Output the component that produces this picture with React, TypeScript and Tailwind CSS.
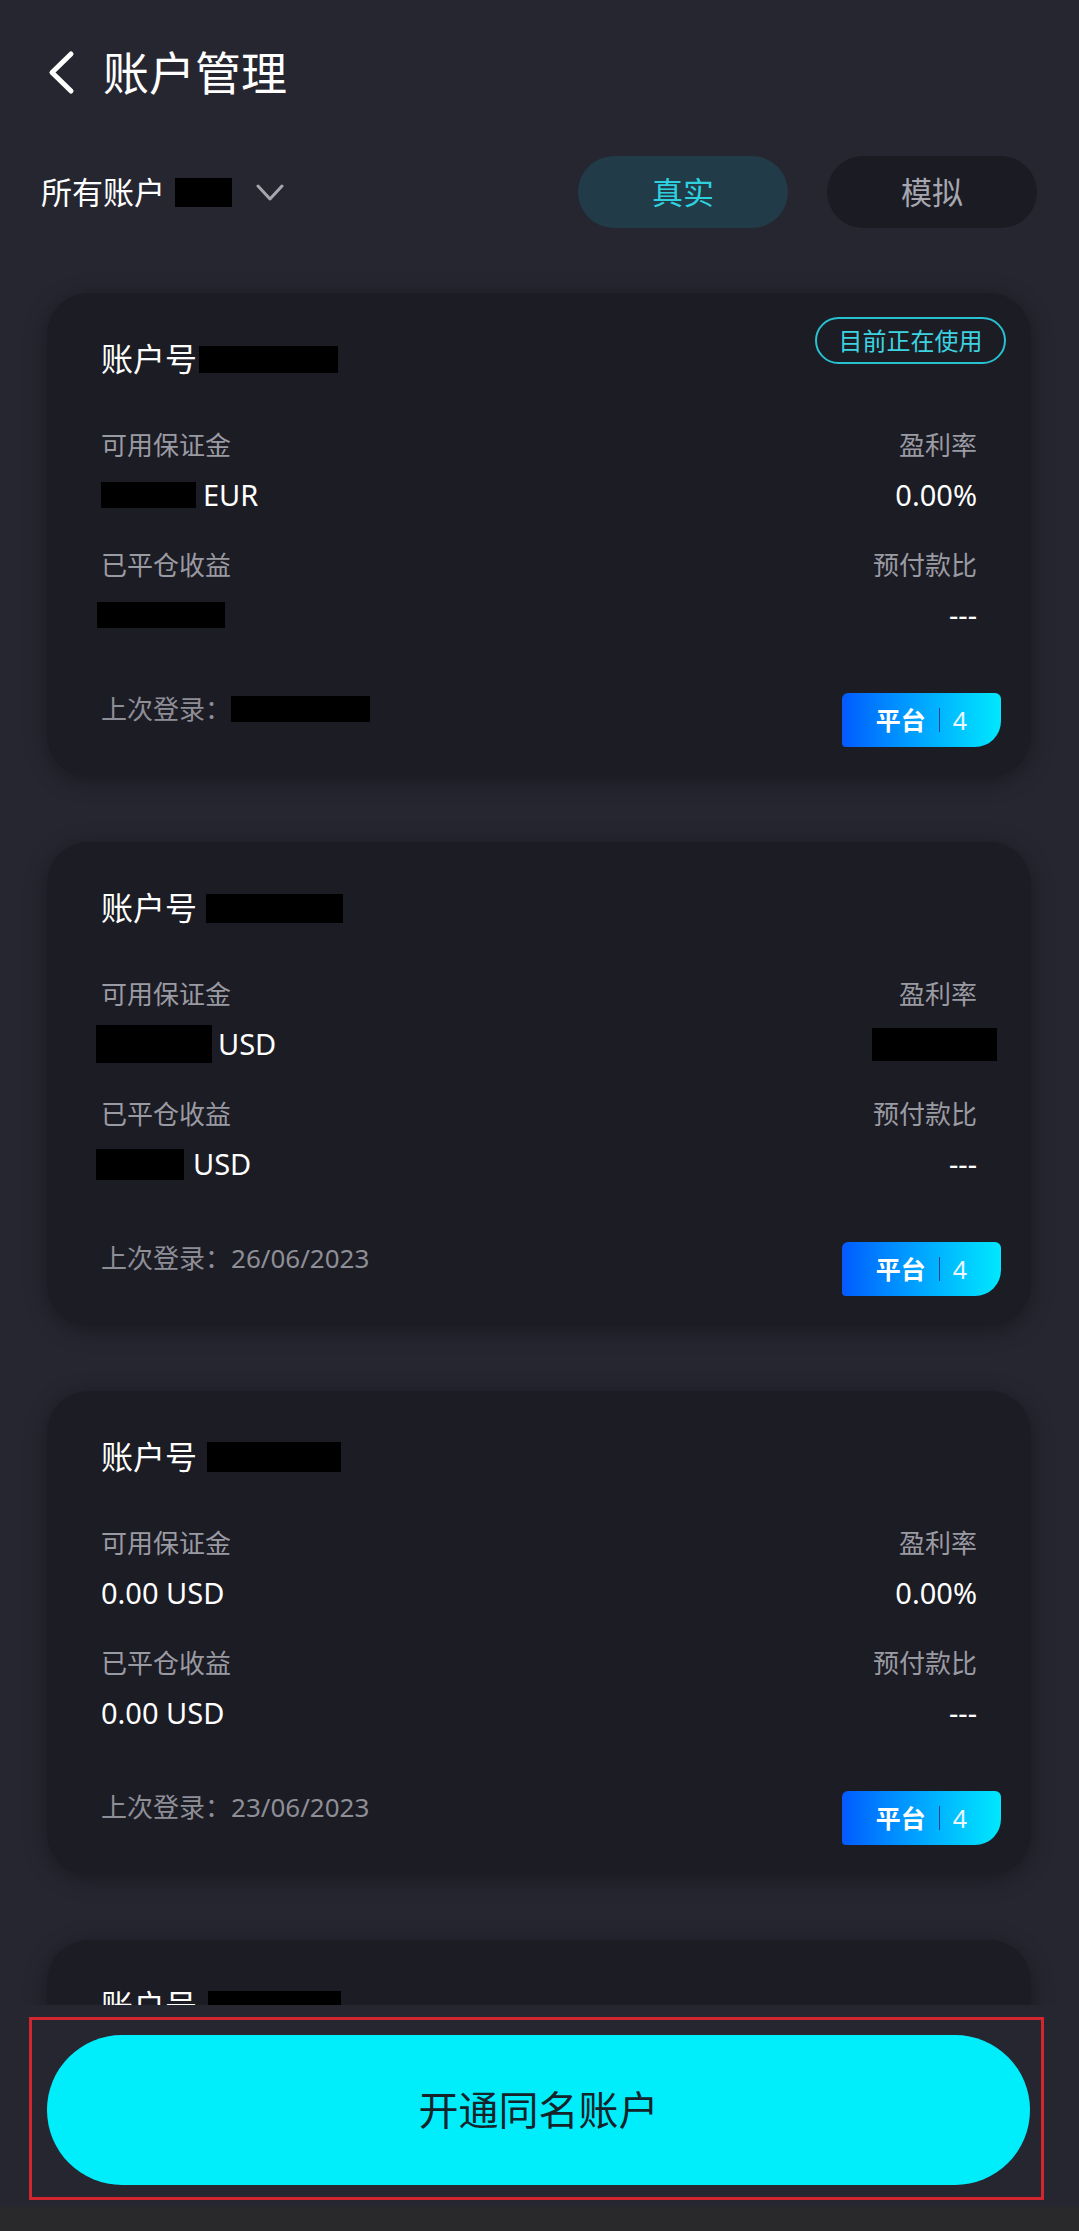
import type { ReactNode } from "react";

const FONT = { fontFamily: '"Noto Sans", "Noto Sans CJK SC", sans-serif' };

/** Black redaction block, sized by a full class string. */
function Mask({ className }: { className: string }) {
  return <span className={`inline-block bg-black ${className}`} aria-hidden />;
}

function BackIcon() {
  return (
    <svg viewBox="0 0 28 45" className="h-[45px] w-[28px]" fill="none" aria-hidden>
      <polyline
        points="24,4 5,22.5 24,41"
        stroke="#ffffff"
        strokeWidth="5"
        strokeLinecap="round"
        strokeLinejoin="round"
      />
    </svg>
  );
}

function ChevronDown() {
  return (
    <svg viewBox="0 0 28 17" className="h-[17px] w-[28px]" fill="none" aria-hidden>
      <polyline
        points="2,2 14,15 26,2"
        stroke="#a6a6ae"
        strokeWidth="3"
        strokeLinecap="round"
        strokeLinejoin="round"
      />
    </svg>
  );
}

type Account = {
  active?: boolean;
  id: ReactNode;
  avail: ReactNode;
  ratio: ReactNode;
  closed: ReactNode;
  prepay: string;
  login: ReactNode;
};

const ACCOUNTS: Account[] = [
  {
    active: true,
    id: <Mask className="ml-[2px] h-[27px] w-[139px]" />,
    avail: (
      <span className="flex items-center">
        <Mask className="h-[26px] w-[95px]" />
        <span className="ml-[7px]">EUR</span>
      </span>
    ),
    ratio: <span>0.00%</span>,
    closed: <Mask className="-ml-[4px] h-[26px] w-[128px]" />,
    prepay: "---",
    login: <Mask className="h-[26px] w-[139px]" />,
  },
  {
    id: <Mask className="ml-[9px] h-[29px] w-[137px]" />,
    avail: (
      <span className="flex items-center">
        <Mask className="-ml-[5px] h-[38px] w-[116px]" />
        <span className="ml-[6px]">USD</span>
      </span>
    ),
    ratio: <Mask className="-mr-[20px] h-[33px] w-[125px]" />,
    closed: (
      <span className="flex items-center">
        <Mask className="-ml-[5px] h-[31px] w-[88px]" />
        <span className="ml-[9px]">USD</span>
      </span>
    ),
    prepay: "---",
    login: "26/06/2023",
  },
  {
    id: <Mask className="ml-[10px] h-[30px] w-[134px]" />,
    avail: <span>0.00 USD</span>,
    ratio: <span>0.00%</span>,
    closed: <span>0.00 USD</span>,
    prepay: "---",
    login: "23/06/2023",
  },
  {
    id: <Mask className="ml-[11px] h-[30px] w-[133px]" />,
    avail: <span>0.00 USD</span>,
    ratio: <span>0.00%</span>,
    closed: <span>0.00 USD</span>,
    prepay: "---",
    login: "20/06/2023",
  },
];

function PlatformTag() {
  return (
    <span className="-mr-[24px] flex h-[54px] w-[159px] items-center justify-center rounded-tl-[6px] rounded-tr-[6px] rounded-br-[26px] rounded-bl-[4px] bg-gradient-to-r from-[#0759ff] to-[#00e8fd]">
      <span className="text-[25px] font-bold leading-none text-white">平台</span>
      <span className="mx-[13px] h-[24px] w-px bg-[#1b3f8c]" />
      <span className="text-[25px] leading-none text-[#eef7ff]">4</span>
    </span>
  );
}

function AccountCard({ a }: { a: Account }) {
  return (
    <div className="relative h-[484px] shrink-0 rounded-[42px] bg-[#1c1c24] px-[54px] pt-[46px] pb-[30px] shadow-[0_4px_22px_rgba(0,0,0,0.35)]">
      {a.active && (
        <span className="absolute right-[25px] top-[24px] flex h-[47px] w-[191px] items-center justify-center rounded-full border-2 border-[#27c1cf] text-[24px] text-[#3dd3e0]">
          目前正在使用
        </span>
      )}
      <div className="flex h-[40px] items-center text-[32px] leading-[40px] text-white">
        账户号
        {a.id}
      </div>

      <div className="mt-[50px] flex h-[32px] items-center justify-between text-[26px] leading-[32px] text-[#9a9aa3]">
        <span>可用保证金</span>
        <span>盈利率</span>
      </div>
      <div className="mt-[16px] flex h-[36px] items-center justify-between text-[29px] leading-[36px] text-white">
        {a.avail}
        {a.ratio}
      </div>

      <div className="mt-[36px] flex h-[32px] items-center justify-between text-[26px] leading-[32px] text-[#9a9aa3]">
        <span>已平仓收益</span>
        <span>预付款比</span>
      </div>
      <div className="mt-[16px] flex h-[36px] items-center justify-between text-[29px] leading-[36px] text-white">
        {a.closed}
        <span>{a.prepay}</span>
      </div>

      <div className="mt-[60px] flex items-start justify-between">
        <span className="flex h-[32px] items-center text-[26px] leading-[32px] text-[#8e8e97]">
          上次登录：{a.login}
        </span>
        <PlatformTag />
      </div>
    </div>
  );
}

export default function App() {
  return (
    <div className="flex h-[2231px] w-[1079px] flex-col overflow-hidden bg-[#262631]" style={FONT}>
      {/* scrolling part, cut off above the action bar */}
      <div className="h-[2005px] shrink-0 overflow-hidden">
        <div className="flex items-center pl-[47px] pt-[46px]">
          <BackIcon />
          <h1 className="ml-[28px] text-[46px] font-normal leading-[52px] text-white">账户管理</h1>
        </div>

        <div className="mt-[58px] flex h-[72px] items-center justify-between pl-[41px] pr-[42px]">
          <div className="flex items-center">
            <span className="text-[31px] leading-[40px] text-white">所有账户</span>
            <Mask className="ml-[10px] h-[29px] w-[57px]" />
            <span className="ml-[24px] flex items-center">
              <ChevronDown />
            </span>
          </div>
          <div className="flex items-center gap-[39px]">
            <button className="flex h-[72px] w-[210px] items-center justify-center rounded-full bg-[#213b48] text-[31px] text-[#2fd0de]">
              真实
            </button>
            <button className="flex h-[72px] w-[210px] items-center justify-center rounded-full bg-[#1b1b23] text-[31px] text-[#a6a6ae]">
              模拟
            </button>
          </div>
        </div>

        <div className="mt-[65px] flex flex-col gap-[65px] pl-[47px] pr-[48px]">
          {ACCOUNTS.map((a, i) => (
            <AccountCard key={i} a={a} />
          ))}
        </div>
      </div>

      {/* action bar */}
      <div className="pt-[12px]">
        <div className="ml-[29px] w-[1015px] border-[3px] border-[#d3252f] pl-[15px] pr-[11px] pt-[15px] pb-[12px]">
          <button className="flex h-[150px] w-full items-center justify-center rounded-full bg-[#00eefc] text-[40px] text-[#14242a]">
            开通同名账户
          </button>
        </div>
        <div className="mt-[7px] h-[24px] bg-[#29292c]" />
      </div>
    </div>
  );
}
